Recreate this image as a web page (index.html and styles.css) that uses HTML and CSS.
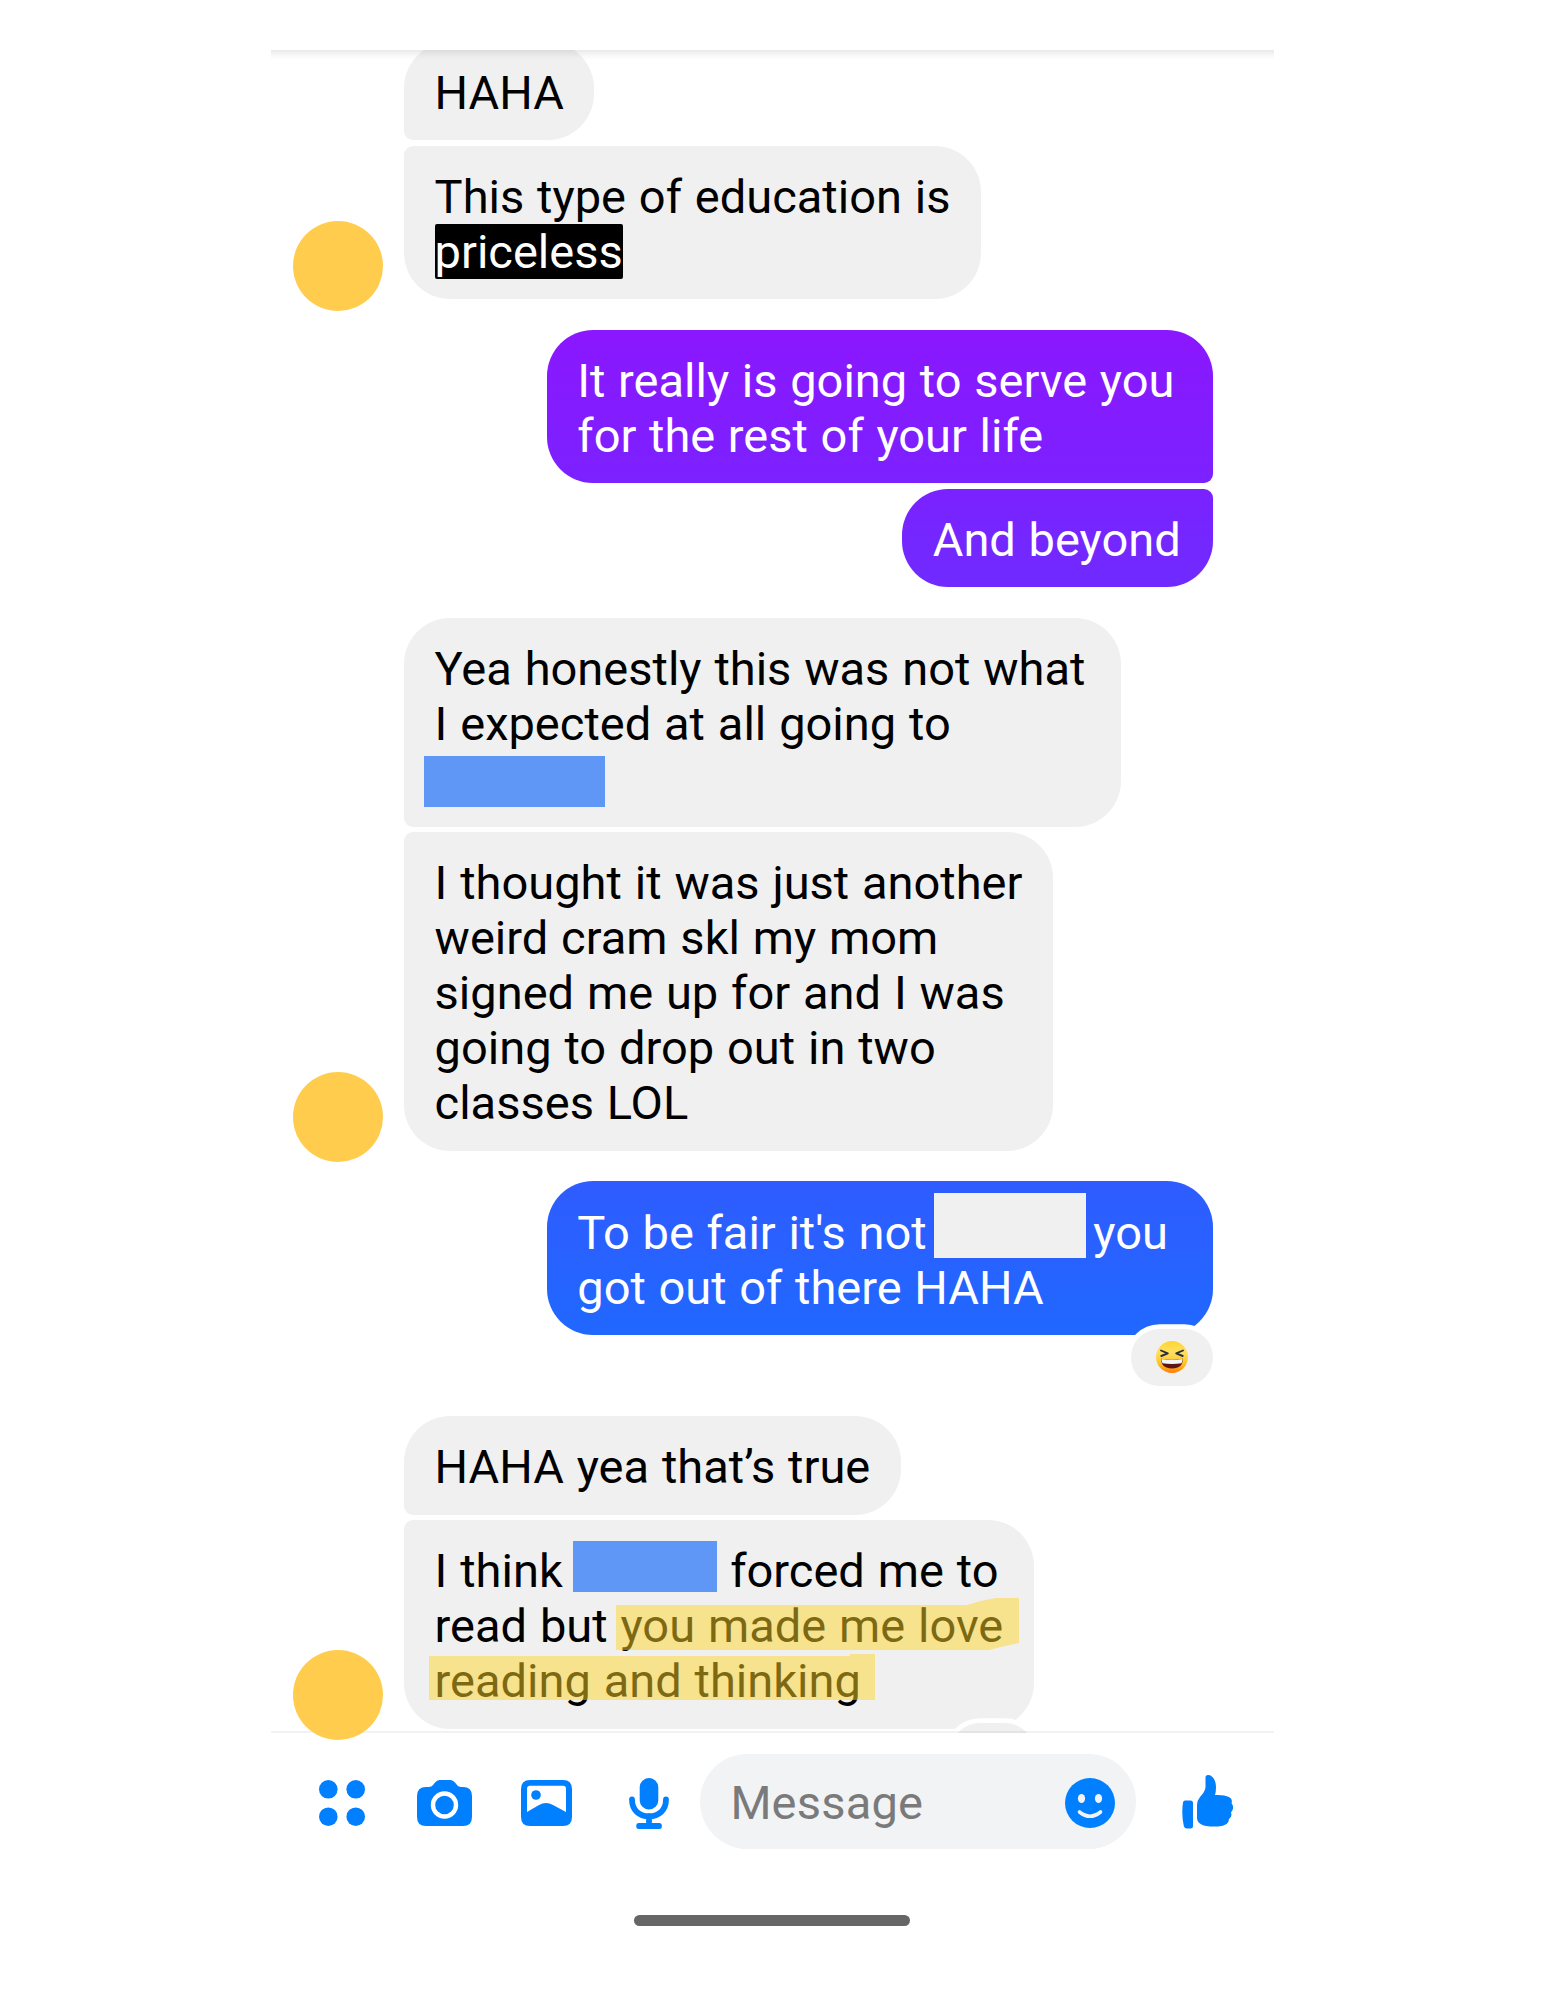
FILE: index.html
```html
<!DOCTYPE html>
<html lang="en">
<head>
<meta charset="utf-8">
<title>Messages</title>
<link rel="stylesheet" href="styles.css">
</head>
<body>
<main class="phone">
  <header class="topbar"></header>
  <section class="thread">
    <div class="group received">
      <span class="avatar"></span>
      <p class="bubble first">HAHA</p>
      <p class="bubble last">This type of education is<br><mark class="found">priceless</mark></p>
    </div>
    <div class="group sent purple">
      <p class="bubble first full">It really is going to serve you<br>for the rest of your life</p>
      <p class="bubble last">And beyond</p>
    </div>
    <div class="group received">
      <span class="avatar"></span>
      <p class="bubble first wide">Yea honestly this was not what<br>I expected at all going to<br><span class="redact school"></span></p>
      <p class="bubble last">I thought it was just another<br>weird cram skl my mom<br>signed me up for and I was<br>going to drop out in two<br>classes LOL</p>
    </div>
    <div class="group sent blue">
      <p class="bubble full">To be fair it's not<span class="redact name"></span>you<br>got out of there HAHA
        <span class="reaction">
          <svg class="laugh" viewBox="0 0 32 32">
            <defs><linearGradient id="face" x1="0" y1="0" x2="0" y2="1"><stop offset="0" stop-color="#ffd52e"/><stop offset=".35" stop-color="#ffe063"/><stop offset=".7" stop-color="#ffc427"/><stop offset="1" stop-color="#ff7a0c"/></linearGradient></defs>
            <circle cx="16" cy="16" r="16" fill="url(#face)"/>
            <path d="M5 9.500 11.800 12.400 5.300 15M27 9.500 20.200 12.400 26.700 15" fill="none" stroke="#2b3037" stroke-width="1.900" stroke-linecap="round" stroke-linejoin="round"/>
            <path d="M5.200 17.800Q16 19 26.800 17.800Q27 27.500 16 27.500Q5 27.500 5.200 17.800Z" fill="#5d1712"/>
            <path d="M5.500 18Q16 19.200 26.500 18Q26.600 20.500 25.500 22.200Q16 23.600 6.500 22.200Q5.400 20.500 5.500 18Z" fill="#f3f5f8"/>
          </svg>
        </span>
      </p>
    </div>
    <div class="group received">
      <span class="avatar"></span>
      <p class="bubble first">HAHA yea that’s true</p>
      <p class="bubble last">I think<span class="redact person"></span>forced me to<br>read but you made me love<br>reading and thinking
        <svg class="marker" viewBox="0 0 590 102"><path d="M187 7H538Q553 2 567 0H590V45Q575 48 560 52H187ZM0 58H421V56H446V102H0Z"/></svg>
        <span class="reaction"></span>
      </p>
    </div>
  </section>
  <footer class="composer">
    <svg class="icon dots" viewBox="0 0 46 46"><circle cx="9.300" cy="9.300" r="9.300"/><circle cx="36.700" cy="9.300" r="9.300"/><circle cx="9.300" cy="36.700" r="9.300"/><circle cx="36.700" cy="36.700" r="9.300"/></svg>
    <svg class="icon camera" viewBox="0 0 55 46"><path fill-rule="evenodd" d="M9 7H12Q14.500 7 16 5L18 2.500Q20 0 22.500 0H33.500Q36 0 38 2.500L40 5Q41.500 7 44 7H46Q55 7 55 16V37Q55 46 46 46H9Q0 46 0 37V16Q0 7 9 7ZM27.500 11.300A13.700 13.700 0 1 0 27.500 38.700A13.700 13.700 0 1 0 27.500 11.300Z"/><circle cx="27.500" cy="25" r="9.300"/></svg>
    <svg class="icon gallery" viewBox="0 0 51 46"><path fill-rule="evenodd" d="M9 0H42Q51 0 51 9V37Q51 46 42 46H9Q0 46 0 37V9Q0 0 9 0ZM9 5.700Q6 5.700 6 8.700V32L18 25Q25 21 32 25L45 32V8.700Q45 5.700 42 5.700Z"/><circle cx="15" cy="15" r="4.800"/></svg>
    <svg class="icon mic" viewBox="0 0 40 51"><rect x="10.700" y="0" width="18.600" height="31.500" rx="9.300"/><path d="M3 21.500C3 32 10 38.200 20 38.200S37 32 37 21.500M20 38V47" fill="none" stroke="#0080ff" stroke-width="5.800" stroke-linecap="round"/><rect x="7.300" y="45" width="25.500" height="6" rx="2.500"/></svg>
    <div class="field">
      <span>Message</span>
      <svg class="smiley" viewBox="0 0 50 50"><circle cx="25" cy="25" r="25"/><ellipse cx="16.500" cy="20.500" rx="3.600" ry="4.600" fill="#f1f3f5"/><ellipse cx="33.500" cy="20.500" rx="3.600" ry="4.600" fill="#f1f3f5"/><path d="M14.500 34Q25 42.500 35.500 34" fill="none" stroke="#f1f3f5" stroke-width="3.600" stroke-linecap="round"/></svg>
    </div>
    <svg class="icon thumb" viewBox="0 0 51 54"><path d="M3 25.500H8.500Q11 25.500 11 28V51Q11 53.500 8.500 53.500H5Q2.500 53.500 1.800 51Q-.8 39 1 27.500Q1.300 25.500 3 25.500Z"/><path d="M23.500 2.500Q23.500 0 26 0C31 0 34 6 34 12Q34 17 33 20Q42 19.500 47 22Q51 24 49.500 28Q53 33 49 37.500Q50.500 42 47 44Q47 51 36 51.500Q24 52 19.500 49.500Q15 47 15 43V30Q15 25.500 18 22Q23.500 16 23.500 12Z"/></svg>
  </footer>
  <div class="home"></div>
</main>
</body>
</html>
```
FILE: styles.css
```css
* { box-sizing: border-box; }
body { margin: 0; background: #fff; font-family: Roboto, "Liberation Sans", sans-serif; font-size: 47px; }
svg { display: block; flex: none; }

.phone { display: flex; flex-direction: column; width: 1003px; height: 2000px; margin-left: 271px; overflow: hidden; }
.topbar { position: relative; z-index: 3; flex: none; height: 50px; background: #fff; }
.topbar::after { content: ""; position: absolute; left: 0; right: 0; top: 100%; height: 10px; background: linear-gradient(rgba(0,0,0,.085), rgba(0,0,0,.025) 60%, rgba(0,0,0,0)); }

.thread { display: flex; flex-direction: column; gap: 30.800px; flex: none; height: 1681px; padding: 0 61px 0 133px; }
.group { position: relative; display: flex; flex: none; flex-direction: column; gap: 5.600px; align-items: flex-start; }
.group:first-child { margin-top: -8.100px; }
.sent { align-items: flex-end; }
.blue { margin-bottom: 50.700px; }

.bubble { position: relative; margin: 0; padding: 23.200px 30.500px 20.200px 30.600px; border-radius: 46px; line-height: 55px; word-spacing: 1.200px; white-space: nowrap; background: #f0f0f0; color: #000; }
.received .first { border-bottom-left-radius: 9px; }
.received .last { border-top-left-radius: 9px; }
.sent .bubble { padding-left: 30.300px; padding-right: 32.300px; word-spacing: 1px; color: #fff; }
.sent .first { border-bottom-right-radius: 9px; }
.sent .last { border-top-right-radius: 9px; }
.full { width: 666px; }
.wide { width: 717px; }
.purple .first { background: linear-gradient(#8b17ff, #7b21ff); }
.purple .last { background: linear-gradient(#7a22ff, #6f2bff); }
.blue .bubble { background: linear-gradient(#2f5cff, #2068ff); }

.avatar { position: absolute; left: -111px; bottom: -11.600px; z-index: 2; width: 90px; height: 90px; border-radius: 50%; background: #ffcc4d; }
.found { border-radius: 2px; background: #000; color: #fff; }

.redact { display: inline-block; vertical-align: top; height: 50.500px; background: #5f97f6; }
.school { width: 181px; margin: 4.800px 0 -6px -10.600px; }
.person { width: 144.500px; margin: -2px 13px 0 10px; }
.name { width: 152px; height: 64.500px; margin: -11.500px 7.500px -8px 7.200px; background: #f0f0f0; }

.marker { position: absolute; left: 25px; top: 78px; width: 590px; height: 102px; fill: rgba(255,212,38,.49); }
.reaction { position: absolute; right: 0; top: calc(100% - 5.500px); display: flex; align-items: center; justify-content: center; width: 82.500px; height: 57px; border-radius: 28.500px; background: #f0f0f0; box-shadow: 0 0 0 4.700px #fff; }
.laugh { width: 32px; height: 32px; margin-top: -2px; }

.composer { position: relative; z-index: 1; display: flex; flex: none; align-items: center; height: 138px; padding: 0 0 0 48.300px; border-top: 2.700px solid rgba(0,0,0,.05); background: #fff; background-clip: padding-box; }
.icon { margin-top: 4px; fill: #0080ff; }
.dots { width: 46px; height: 46px; }
.camera { width: 55px; height: 46px; margin-left: 51.700px; }
.gallery { width: 51px; height: 46px; margin-left: 49.400px; }
.mic { width: 40px; height: 51px; margin-left: 57px; }
.field { display: flex; flex: none; align-items: center; justify-content: space-between; width: 436px; height: 95px; margin-left: 30.500px; padding: 0 20.500px 0 30.500px; border-radius: 47.500px; background: #f1f3f5; color: #7a7a7a; }
.field span { padding-top: 3px; letter-spacing: .2px; }
.smiley { width: 50px; height: 50px; margin-top: 3px; fill: #0080ff; }
.thumb { width: 51px; height: 54px; margin: 2px 0 0 46.300px; }
.home { flex: none; width: 276px; height: 10.500px; margin: 46px 0 0 363px; border-radius: 6px; background: #666; }
```
